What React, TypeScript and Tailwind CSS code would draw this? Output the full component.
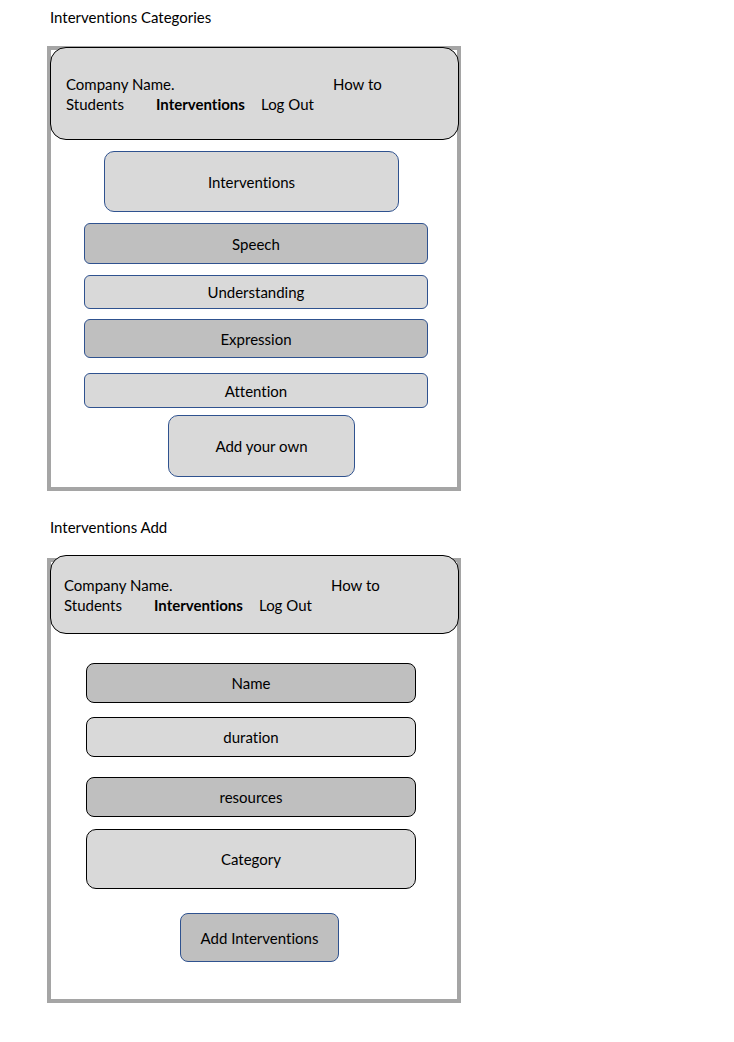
import React from "react";

type NavProps = { className: string };

function SiteHeader({ className }: NavProps) {
  return (
    <header
      className={`-mr-[2px] -ml-px flex flex-col justify-center rounded-2xl border border-black bg-[#d9d9d9] ${className}`}
    >
      <nav aria-label="Main">
        <div className="flex">
          <a href="#home" className="w-[267px]">Company Name.</a>
          <a href="#how-to">How to</a>
        </div>
        <div className="flex">
          <a href="#students" className="w-[90px]">Students</a>
          <a href="#interventions" aria-current="page" className="w-[105px] font-bold">Interventions</a>
          <a href="#log-out">Log Out</a>
        </div>
      </nav>
    </header>
  );
}

const categories = [
  { name: "Speech", style: "mt-[11px] h-[41px] bg-[#bfbfbf]" },
  { name: "Understanding", style: "mt-[11px] h-[34px] bg-[#d9d9d9]" },
  { name: "Expression", style: "mt-[10px] h-[39px] bg-[#bfbfbf]" },
  { name: "Attention", style: "mt-[15px] h-[35px] bg-[#d9d9d9]" },
];

const fields = [
  { name: "Name", style: "h-10 rounded-lg bg-[#bfbfbf]" },
  { name: "duration", style: "mt-[14px] h-10 rounded-lg bg-[#d9d9d9]" },
  { name: "resources", style: "mt-5 h-10 rounded-lg bg-[#bfbfbf]" },
  { name: "Category", style: "mt-3 h-[60px] rounded-[10px] bg-[#d9d9d9]" },
];

export default function App() {
  return (
    <main className="min-h-screen bg-white px-[47px] pt-[7px] pb-10 font-[Lato,sans-serif] text-[15px] leading-5 text-black [font-variant-ligatures:none]">
      <section className="max-w-[414px]">
        <h2 className="pl-[3px]">Interventions Categories</h2>
        <div className="mt-[19px] border-4 border-[#a5a5a5] pb-[10px]">
          <SiteHeader className="-mt-[3px] h-[93px] pl-[15px]" />
          <h3 className="mt-[11px] mr-[58px] ml-[53px] flex h-[61px] items-center justify-center rounded-[10px] border border-[#2f528f] bg-[#d9d9d9]">
            Interventions
          </h3>
          <div className="mr-[29px] ml-[33px] flex flex-col">
            {categories.map((c) => (
              <button
                key={c.name}
                type="button"
                className={`rounded-md border border-[#2f528f] ${c.style}`}
              >
                {c.name}
              </button>
            ))}
          </div>
          <div className="mt-[7px] mr-[102px] ml-[117px] flex">
            <button type="button" className="h-[62px] grow rounded-[10px] border border-[#2f528f] bg-[#d9d9d9]">
              Add your own
            </button>
          </div>
        </div>
      </section>

      <section className="mt-[26px] max-w-[414px]">
        <h2 className="pl-[3px]">Interventions Add</h2>
        <div className="mt-[21px] border-4 border-[#a5a5a5] pb-[37px]">
          <SiteHeader className="-mt-[7px] h-[79px] pl-[13px]" />
          <form className="mt-[29px] flex flex-col" onSubmit={(e) => e.preventDefault()}>
            <div className="mr-[41px] ml-[35px] flex flex-col">
              {fields.map((f) => (
                <input
                  key={f.name}
                  type="text"
                  name={f.name}
                  aria-label={f.name}
                  placeholder={f.name}
                  className={`w-full border border-black text-center placeholder:text-black placeholder:opacity-100 ${f.style}`}
                />
              ))}
            </div>
            <div className="mt-6 mr-[118px] ml-[129px] flex">
              <button type="submit" className="h-[49px] grow rounded-lg border border-[#2f528f] bg-[#bfbfbf]">
                Add Interventions
              </button>
            </div>
          </form>
        </div>
      </section>
    </main>
  );
}
